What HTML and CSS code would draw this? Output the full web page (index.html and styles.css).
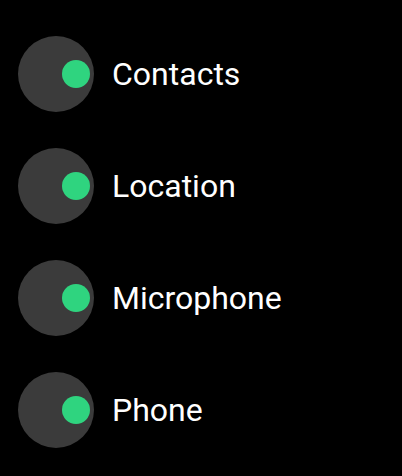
FILE: index.html
```html
<!DOCTYPE html>
<html>
<head>
<meta charset="utf-8">
<link rel="stylesheet" href="styles.css">
</head>
<body>
<ul class="list">
  <li class="row"><span class="toggle"><span class="dot"></span></span><span class="label">Contacts</span></li>
  <li class="row"><span class="toggle"><span class="dot"></span></span><span class="label">Location</span></li>
  <li class="row"><span class="toggle"><span class="dot"></span></span><span class="label">Microphone</span></li>
  <li class="row"><span class="toggle"><span class="dot"></span></span><span class="label">Phone</span></li>
</ul>
</body>
</html>
```
FILE: styles.css
```css
html, body {
  margin: 0;
  padding: 0;
  background: #000;
  height: 100%;
  overflow: hidden;
}
.list {
  list-style: none;
  margin: 0;
  padding: 36px 0 0 18px;
  display: flex;
  flex-direction: column;
  gap: 36px;
}
.row {
  display: flex;
  align-items: center;
  gap: 18px;
  height: 76px;
}
.toggle {
  width: 76px;
  height: 76px;
  border-radius: 50%;
  background: #3b3b3b;
  display: flex;
  align-items: center;
  justify-content: flex-end;
  padding-right: 4px;
  box-sizing: border-box;
  flex: none;
}
.dot {
  width: 28px;
  height: 28px;
  border-radius: 50%;
  background: #2fd47f;
}
.label {
  font-family: Roboto, "Noto Sans", sans-serif;
  font-size: 32px;
  color: #fff;
  line-height: 1;
}
```
